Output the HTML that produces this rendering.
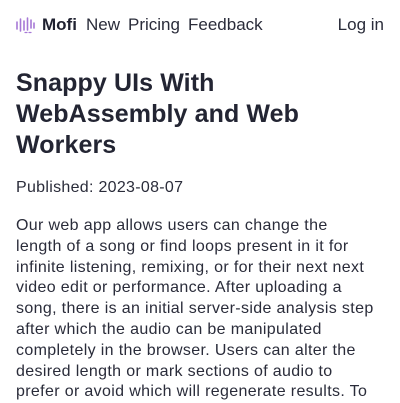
<!DOCTYPE html>
<html><head><style>
body{margin:0;width:400px;height:400px;overflow:hidden;background:#fff;font-family:"Liberation Sans",sans-serif;color:#1f2130}
.nav{position:absolute;top:15px;left:16px;right:16px;height:22px;font-size:17px;color:#2a2c3a}
.nav span{position:absolute;top:0}
h1{position:absolute;left:16px;top:68px;margin:0;font-size:25px;line-height:31px;font-weight:bold;color:#232533;white-space:nowrap;letter-spacing:0.1px}
.pub{position:absolute;left:16px;top:179px;font-size:16px;color:#2a2c3a;letter-spacing:0.3px}
p{position:absolute;left:16px;top:216px;margin:0;white-space:nowrap;font-size:16px;line-height:20.8px;color:#2a2c3a;letter-spacing:0.35px}
</style></head><body>
<div class="nav">
<svg style="position:absolute;left:0;top:2px" width="19" height="17" viewBox="0 0 19 17"><g stroke="#a678d6" stroke-width="1.6" stroke-linecap="round"><path d="M1 5v7M4.5 2v12M8 4v9M11.5 1v12M15 3v8M18 6v5"/><path d="M9 15.5h2M13 15.5h2" stroke-width="1.2"/></g></svg>
<span style="left:26px;font-weight:bold;color:#1f2130">Mofi</span>
<span style="left:70px">New</span>
<span style="left:112px">Pricing</span>
<span style="left:172px">Feedback</span>
<span style="right:0">Log in</span>
</div>
<h1>Snappy UIs With<br>WebAssembly and Web<br>Workers</h1>
<div class="pub">Published: 2023-08-07</div>
<p>Our web app allows users can change the<br>length of a song or find loops present in it for<br>infinite listening, remixing, or for their next next<br>video edit or performance. After uploading a<br>song, there is an initial server-side analysis step<br>after which the audio can be manipulated<br>completely in the browser. Users can alter the<br>desired length or mark sections of audio to<br>prefer or avoid which will regenerate results. To</p>
</body></html>
